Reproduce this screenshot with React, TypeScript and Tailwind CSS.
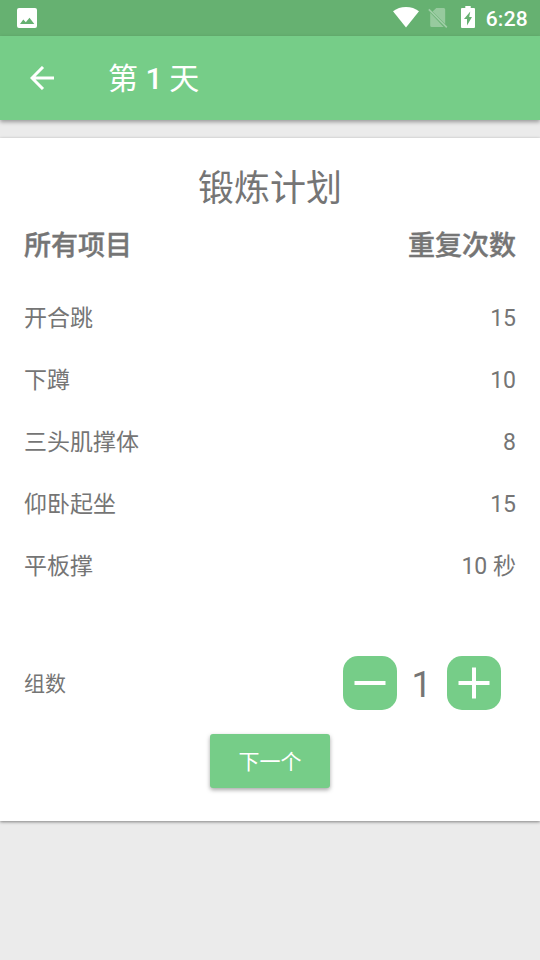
import { useState } from 'react';

const EXERCISES: { name: string; reps: string }[] = [
  { name: '开合跳',     reps: '15' },
  { name: '下蹲',       reps: '10' },
  { name: '三头肌撑体', reps: '8' },
  { name: '仰卧起坐',   reps: '15' },
  { name: '平板撑',     reps: '10 秒' },
];

function StatusBar() {
  return (
    <div className="flex h-9 items-center bg-[#66b171] pl-[17px] pr-[12px] text-white">
      <svg width="20" height="20" viewBox="0 0 20 20" fill="currentColor" fillRule="evenodd">
        <path d="M2 0h16a2 2 0 0 1 2 2v16a2 2 0 0 1-2 2H2a2 2 0 0 1-2-2V2a2 2 0 0 1 2-2zM3 16h14.3l-4.8-6.3-3.7 4.6L6.3 11.6z" />
      </svg>
      <svg className="-mt-px ml-auto" width="26" height="21" viewBox="0 0 26 21" fill="currentColor">
        <path d="M0 4.3Q5.5 0 13 0T26 4.3L13 20.5z" />
      </svg>
      <svg className="ml-[9px]" width="20" height="22" viewBox="0 0 20 22">
        <path d="M8.3 1h7.4A1.5 1.5 0 0 1 17.2 2.5v14.6L4.6 4.5zM2.2 5.7v12.8a1.5 1.5 0 0 0 1.5 1.5h12z" fill="#fff" opacity="0.32" />
        <path d="M0.8 2.4l18 18" stroke="#fff" strokeWidth="1.6" opacity="0.38" />
      </svg>
      <svg className="-mt-[2px] ml-[13px]" width="14" height="22" viewBox="0 0 14 22" fill="currentColor" fillRule="evenodd">
        <path d="M4.3 0h5.4v2H13a1 1 0 0 1 1 1v18a1 1 0 0 1-1 1H1a1 1 0 0 1-1-1V3a1 1 0 0 1 1-1h3.3zM9.3 5.5L3 13h3v6.5l5-8.5H8.2z" />
      </svg>
      <span className="ml-[11px] pt-[2px] text-[21px] font-medium leading-[34px] tracking-[0.25px]">6:28</span>
    </div>
  );
}

function StepButton({ plus, onClick }: { plus?: boolean; onClick: () => void }) {
  return (
    <button onClick={onClick} aria-label={plus ? '+' : '-'} className="size-[54px] rounded-[15px] bg-[#76cd88]">
      <svg width="54" height="54" viewBox="0 0 54 54" stroke="#fff" strokeWidth="4">
        <path d="M11.5 27h31" />
        {plus && <path d="M27 11.5v31" />}
      </svg>
    </button>
  );
}

export default function App() {
  const [sets, setSets] = useState(1);

  return (
    <div className="flex h-[960px] w-[540px] flex-col bg-[#ebebeb] font-[Roboto,'Noto_Sans_CJK_SC',sans-serif] text-[#757575]">
      <StatusBar />
      <header className="flex h-[84px] items-center bg-[#76cd88] pl-[30px] text-white shadow-[0_2px_4px_rgba(0,0,0,0.35)]">
        <svg width="24" height="24" viewBox="0 0 24 24" fill="none" stroke="currentColor" strokeWidth="3">
          <path d="M24 12H2.5M13 1L2 12l11 11" />
        </svg>
        <h1 className="ml-[54px] pt-[2px] text-[30px] leading-[36px]">
          第 <span className="font-medium tracking-[-0.7px]">1</span> 天
        </h1>
      </header>

      <main className="mt-[18px] flex h-[683px] flex-col bg-white px-6 shadow-[0_1px_3px_rgba(0,0,0,0.45)]">
        <h2 className="mt-[29px] text-center text-[36px] leading-[44px]">锻炼计划</h2>
        <div className="mt-[17px] flex justify-between text-[27px] font-medium leading-[36px] [-webkit-text-stroke:0.4px]">
          <span>所有项目</span>
          <span>重复次数</span>
        </div>

        <ul className="mt-[24px] text-[23px] leading-[62px]">
          {EXERCISES.map(({ name, reps }) => (
            <li key={name} className="flex h-[62px] justify-between">
              <span>{name}</span>
              <span>{reps}</span>
            </li>
          ))}
        </ul>

        <div className="mt-[58px] flex items-center pr-[15px]">
          <span className="pt-1 text-[21px]">组数</span>
          <div className="ml-auto flex items-center">
            <StepButton onClick={() => setSets(Math.max(1, sets - 1))} />
            <span className="w-[50px] pr-px pt-[4px] text-center text-[36px] leading-[50px]">{sets}</span>
            <StepButton plus onClick={() => setSets(sets + 1)} />
          </div>
        </div>

        <button className="mx-auto mt-6 h-[54px] w-[120px] rounded-[3px] bg-[#76cd88] pt-[3px] text-[21px] text-white shadow-[0_2px_4px_rgba(0,0,0,0.35)]">
          下一个
        </button>
      </main>
    </div>
  );
}
